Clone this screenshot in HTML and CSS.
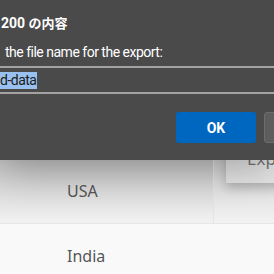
FILE: index.html
```html
<!DOCTYPE html>
<html>
<head>
  <meta charset="UTF-8">
  <meta name="viewport" content="width=device-width, initial-scale=1.0">
  <title>Export</title>
  <link rel="stylesheet" href="styles.css">
</head>
<body>
<div id="page">
  <div class="row first">
    <div class="cell name">USA</div>
    <div class="cell action">
      <div class="export-btn">Export</div>
    </div>
  </div>
  <div class="row">
    <div class="cell name">India</div>
    <div class="cell action"></div>
  </div>
</div>

<div class="dialog">
  <div class="dialog-title">200 <span class="jp">の内容</span></div>
  <div class="dialog-text">the file name for the export:</div>
  <div class="dialog-input"><span class="sel">d-data</span></div>
  <div class="dialog-buttons">
    <button class="btn ok">OK</button>
    <button class="btn cancel"></button>
  </div>
</div>
</body>
</html>
```

FILE: styles.css
```css
html, body {
  margin: 0;
  padding: 0;
  overflow: hidden;
}
body {
  background-color: #f9f9f9;
  font-family: "Noto Sans", "Open Sans", sans-serif;
  width: 274px;
  height: 274px;
  position: relative;
}
#page {
  padding-top: 159px;
}
.row {
  display: flex;
  height: 64px;
  border-bottom: 1px solid #e6e6e6;
  background-color: #f9f9f9;
}
.row.first {
  background: linear-gradient(#c6c6c6, #f2f2f2);
}
.cell {
  display: flex;
  align-items: center;
}
.name {
  flex: none;
  width: 214px;
  padding-left: 67px;
  box-sizing: border-box;
  font-size: 16px;
  color: #555;
}
.first .name {
  border-right: 1px solid #e4e4e4;
}
.action {
  flex: 1;
  min-width: 0;
  padding-left: 12px;
  align-items: flex-start;
}
.first .action {
  background: linear-gradient(#d4d4d4, #f2f2f2);
}
.export-btn {
  flex: none;
  margin-top: -40px;
  height: 64px;
  width: 90px;
  padding-top: 30px;
  box-sizing: border-box;
  padding-left: 21px;
  background-color: #e6e6e6;
  color: #777;
  font-size: 17px;
  line-height: 20px;
  box-shadow: 0 5px 10px rgba(0, 0, 0, 0.2);
}

.dialog {
  position: absolute;
  top: 0;
  left: 0;
  width: 274px;
  height: 160px;
  background-color: #4a4a4a;
  color: #fff;
  font-family: Roboto, "Noto Sans CJK JP", sans-serif;
  box-shadow: 0 8px 40px rgba(0, 0, 0, 0.3);
}
.dialog-title {
  font-weight: bold;
  font-size: 14px;
  padding-left: 1px;
  margin-top: 12px;
  height: 22px;
  line-height: 22px;
}
.jp {
  font-family: "Noto Sans CJK JP", sans-serif;
  font-size: 13px;
}
.dialog-text {
  font-size: 14px;
  letter-spacing: -0.5px;
  padding-left: 5px;
  margin-top: 8px;
  height: 20px;
  line-height: 20px;
}
.dialog-input {
  margin-top: 4px;
  height: 24px;
  border-top: 2px solid #a3a3a3;
  border-bottom: 2px solid #a3a3a3;
  font-size: 14px;
  letter-spacing: -0.5px;
  color: #1b1b1b;
  display: flex;
  align-items: center;
}
.sel {
  background-color: #99c1f0;
  line-height: 17px;
  padding-right: 1px;
}
.dialog-buttons {
  display: flex;
  gap: 8px;
  margin-top: 18px;
  padding-left: 176px;
}
.btn {
  flex: none;
  width: 80px;
  height: 31px;
  border-radius: 3px;
  font-family: Roboto, sans-serif;
  font-size: 14px;
  font-weight: bold;
  border: none;
  color: #fff;
}
.ok {
  background-color: #0067c0;
}
.cancel {
  background-color: #5d5d5d;
  border: 1px solid #6c6c6c;
}
```
